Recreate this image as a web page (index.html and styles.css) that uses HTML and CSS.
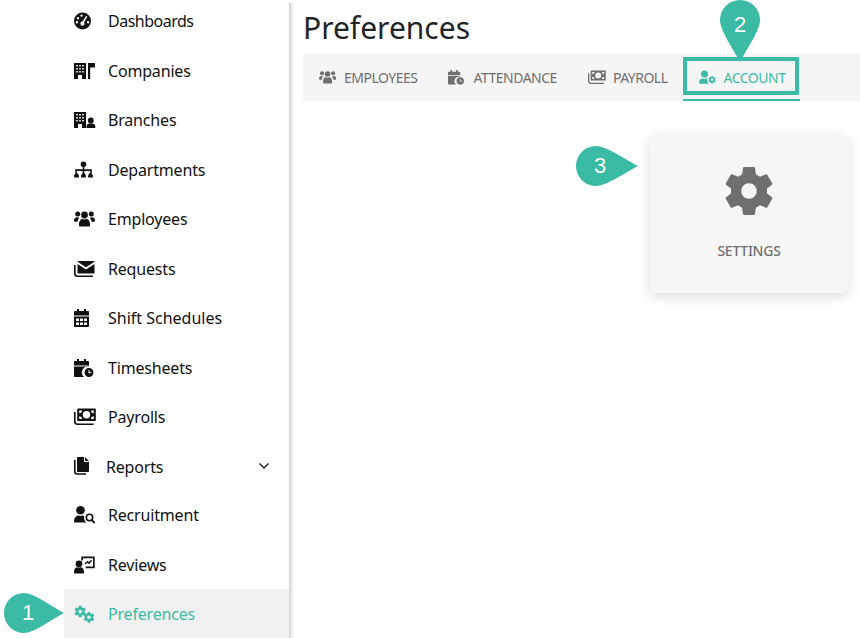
FILE: index.html
```html
<!DOCTYPE html>
<html lang="en">
<head>
  <meta charset="UTF-8" />
  <title>Preferences</title>
  <link rel="stylesheet" href="styles.css">
</head>
<body>
  <svg class="defs" width="0" height="0">
    <defs>
      <path id="gear" d="M19.14 12.94c.04-.3.06-.61.06-.94 0-.32-.02-.64-.07-.94l2.03-1.58c.18-.14.23-.41.12-.61l-1.92-3.32c-.12-.22-.37-.29-.59-.22l-2.39.96c-.5-.38-1.03-.7-1.62-.94l-.36-2.54c-.04-.24-.24-.41-.48-.41h-3.84c-.24 0-.43.17-.47.41l-.36 2.54c-.59.24-1.13.57-1.62.94l-2.39-.96c-.22-.08-.47 0-.59.22L2.74 8.87c-.12.21-.08.47.12.61l2.03 1.58c-.05.3-.09.63-.09.94s.02.64.07.94l-2.03 1.58c-.18.14-.23.41-.12.61l1.92 3.32c.12.22.37.29.59.22l2.39-.96c.5.38 1.03.7 1.62.94l.36 2.54c.05.24.24.41.48.41h3.84c.24 0 .44-.17.47-.41l.36-2.54c.59-.24 1.13-.56 1.62-.94l2.39.96c.22.08.47 0 .59-.22l1.92-3.32c.12-.22.07-.47-.12-.61l-2.01-1.58zM12 15.1c-1.71 0-3.1-1.39-3.1-3.1s1.39-3.1 3.1-3.1 3.1 1.39 3.1 3.1-1.39 3.1-3.1 3.1z"/>
      <symbol id="i-dash" viewBox="0 0 22 18">
        <path fill-rule="evenodd" d="M8.500.5a8.500 8.500 0 1 1 0 17 8.500 8.500 0 0 1 0-17zM7.500 2.400a1.200 1.200 0 1 0 0 2.400 1.200 1.200 0 0 0 0-2.400zM4 5a1.200 1.200 0 1 0 0 2.400A1.200 1.200 0 0 0 4 5zM2.900 9a1.200 1.200 0 1 0 0 2.400 1.200 1.200 0 0 0 0-2.400zM14.100 9a1.200 1.200 0 1 0 0 2.400 1.200 1.200 0 0 0 0-2.400zM12 4L8.600 9.600a2 2 0 1 0 1.400.8l3.400-5.600z"/>
      </symbol>
      <symbol id="i-company" viewBox="0 0 22 18">
        <path fill-rule="evenodd" d="M0 1h12v16H8v-4H4v4H0zM2.200 3v1.600h1.600V3zM5.200 3v1.600h1.600V3zM8.200 3v1.600h1.600V3zM2.200 6v1.600h1.600V6zM5.200 6v1.600h1.600V6zM8.200 6v1.600h1.600V6zM2.200 9v1.600h1.600V9zM5.200 9v1.600h1.600V9zM8.200 9v1.600h1.600V9z"/>
        <path d="M14 1h7v4.500h-4.800V17H14z"/>
      </symbol>
      <symbol id="i-branch" viewBox="0 0 22 18">
        <path fill-rule="evenodd" d="M0 1h12v16H8v-4H4v4H0zM2.200 3v1.600h1.600V3zM5.200 3v1.600h1.600V3zM8.200 3v1.600h1.600V3zM2.200 6v1.600h1.600V6zM5.200 6v1.600h1.600V6zM8.200 6v1.600h1.600V6zM2.200 9v1.600h1.600V9zM5.200 9v1.600h1.600V9zM8.200 9v1.600h1.600V9z"/>
        <circle cx="16.800" cy="9.500" r="2.900"/>
        <path d="M12.500 17v-1.500c0-1.800 1.400-3 3-3h2.800c1.600 0 3 1.200 3 3V17z"/>
      </symbol>
      <symbol id="i-sitemap" viewBox="0 0 22 18">
        <circle cx="9.500" cy="3.300" r="2.800"/>
        <path d="M8.700 5h1.600v3.300h7.500V12h-1.600V9.900h-5.900V12H8.700V9.900H2.800V12H1.200V8.300h7.500z"/>
        <path d="M0 16.500c0-2.800 1-4.500 2.500-4.500S5 13.700 5 16.500zM7 16.500c0-2.800 1-4.500 2.500-4.500s2.500 1.700 2.500 4.500zM14 16.500c0-2.800 1-4.500 2.500-4.500s2.500 1.700 2.500 4.500z"/>
      </symbol>
      <symbol id="i-users" viewBox="0 0 22 18">
        <circle cx="3.700" cy="4" r="2.500"/>
        <circle cx="17.300" cy="4" r="2.500"/>
        <circle cx="10.500" cy="5" r="3.400"/>
        <path d="M0 11c0-2.500 1-3.800 3-3.800 1 0 1.700.3 2.300.8-1.100 1-1.700 2.200-1.800 3.800H1c-.6 0-1-.3-1-.8zM21 11c0-2.500-1-3.800-3-3.800-1 0-1.700.3-2.300.8 1.100 1 1.700 2.200 1.800 3.800H20c.6 0 1-.3 1-.8zM5 14c0-3 1.600-5 3.500-5 1.300.6 2.700.6 4 0 1.900 0 3.500 2 3.500 5v1.500c0 .6-.4 1-1 1H6c-.6 0-1-.4-1-1z"/>
      </symbol>
      <symbol id="i-requests" viewBox="0 0 22 18">
        <path d="M4 1h15.500c.5 0 .9.300 1 .7L12 7.300 3.500 1.700c.1-.4.300-.7.500-.7zM3.500 4l8.500 5.400L20.500 4v8.500c0 .6-.4 1-1 1h-15c-.6 0-1-.4-1-1z"/>
        <path d="M.8 5v8.500c0 1.700 1.100 2.800 2.800 2.800H19" fill="none" stroke="currentColor" stroke-width="1.600"/>
      </symbol>
      <symbol id="i-calendar" viewBox="0 0 22 18">
        <path fill-rule="evenodd" d="M3 0h2v2h5V0h2v2h2c.6 0 1 .4 1 1v3.500H0V3c0-.6.400-1 1-1h2zM0 7.500h15V17c0 .6-.4 1-1 1H1c-.6 0-1-.4-1-1zM2 9.500v2.500h3V9.500zM6 9.500v2.500h3V9.500zM10 9.500v2.500h3V9.500zM2 13.500V16h3v-2.500zM6 13.500V16h3v-2.500zM10 13.500V16h3v-2.500z"/>
      </symbol>
      <symbol id="i-timesheet" viewBox="0 0 22 18">
        <path d="M3 0h2v2h5V0h2v2h2c.6 0 1 .4 1 1v3.500H0V3c0-.6.400-1 1-1h2zM0 7.500h15v.6a5.600 5.600 0 0 0-4.800 9.900H1c-.6 0-1-.4-1-1z"/>
        <path fill-rule="evenodd" d="M15 9a4.500 4.500 0 1 1 0 9 4.500 4.500 0 0 1 0-9zM14.500 11v3.200h3v-1h-2V11z"/>
      </symbol>
      <symbol id="i-money" viewBox="0 0 22 18">
        <path fill-rule="evenodd" d="M4 .5h17c.5 0 .8.300.8.800v10.900c0 .5-.3.800-.8.800H4c-.5 0-.8-.3-.8-.8V1.300c0-.5.300-.8.800-.8zM12.500 3a3.700 3.700 0 1 0 0 7.400 3.700 3.700 0 0 0 0-7.400zM5.200 2.500H8a2.800 2.800 0 0 1-2.800 2.800zM19.800 2.500H17a2.800 2.800 0 0 0 2.800 2.800zM5.200 11H8a2.800 2.800 0 0 0-2.800-2.800zM19.800 11H17a2.800 2.800 0 0 1 2.800-2.800z"/>
        <path d="M.8 4v9.500c0 1.700 1.100 2.800 2.800 2.800h16" fill="none" stroke="currentColor" stroke-width="1.600"/>
      </symbol>
      <symbol id="i-copy" viewBox="0 0 22 18">
        <path d="M4 0h6v4c0 .6.400 1 1 1h4v9c0 .6-.4 1-1 1H4c-.6 0-1-.4-1-1V1c0-.6.400-1 1-1zM11 0l4 4h-4z"/>
        <path d="M.8 3v11.500c0 1.500 1 2.500 2.500 2.500H12" fill="none" stroke="currentColor" stroke-width="1.600"/>
      </symbol>
      <symbol id="i-recruit" viewBox="0 0 22 18">
        <circle cx="6.500" cy="4.300" r="4.300"/>
        <path d="M0 15.500c0-3.600 2.200-6 4.500-6 1.300.5 2.700.5 4 0 .6 0 1.200.2 1.700.5-.6 2.600.3 5 2.300 6.500H1c-.6 0-1-.4-1-1z"/>
        <circle cx="15.500" cy="11.500" r="3.200" fill="none" stroke="currentColor" stroke-width="1.600"/>
        <path d="M17.500 13.800l3.200 3.200" stroke="currentColor" stroke-width="1.800"/>
      </symbol>
      <symbol id="i-review" viewBox="0 0 22 18">
        <circle cx="5" cy="7.800" r="3.400"/>
        <path d="M0 16c0-3 1.600-4.800 3.500-4.800 1 .4 2 .4 3 0 1.900 0 3.500 1.800 3.500 4.800v.5c0 .6-.4 1-1 1H1c-.6 0-1-.4-1-1z"/>
        <path d="M7.500 .5h13.200v11.800h-9v-1.700h7.300V2.200H9V4.500H7.300V1c0-.3 0-.5.200-.5z"/>
        <path d="M11 8l2.500-2.200 1.500 1.300 2.500-2.800" fill="none" stroke="currentColor" stroke-width="1.500"/>
      </symbol>
      <symbol id="i-cogs" viewBox="0 0 22 18">
        <use href="#gear" transform="translate(-1 -.6) scale(.6)"/>
        <use href="#gear" transform="translate(8.200 5.600) scale(.56)"/>
      </symbol>
      <symbol id="i-usercog" viewBox="0 0 22 18">
        <circle cx="6.800" cy="4.800" r="4.300"/>
        <path d="M0 15.500c0-3.200 2-5.200 4.500-5.200 1.500.5 3 .5 4.500 0 .4 0 .8.100 1.200.2-.3 2.300.1 4.300 1.200 6.500H1c-.6 0-1-.4-1-1z"/>
        <use href="#gear" transform="translate(10.200 6.200) scale(.48)"/>
      </symbol>
    </defs>
  </svg>

  <div class="page">
    <nav class="sidebar">
      <a class="nav-item tight"><svg class="nav-icon"><use href="#i-dash"/></svg>Dashboards</a>
      <a class="nav-item"><svg class="nav-icon"><use href="#i-company"/></svg>Companies</a>
      <a class="nav-item"><svg class="nav-icon"><use href="#i-branch"/></svg>Branches</a>
      <a class="nav-item"><svg class="nav-icon"><use href="#i-sitemap"/></svg>Departments</a>
      <a class="nav-item"><svg class="nav-icon"><use href="#i-users"/></svg>Employees</a>
      <a class="nav-item"><svg class="nav-icon"><use href="#i-requests"/></svg>Requests</a>
      <a class="nav-item wide"><svg class="nav-icon"><use href="#i-calendar"/></svg>Shift Schedules</a>
      <a class="nav-item"><svg class="nav-icon"><use href="#i-timesheet"/></svg>Timesheets</a>
      <a class="nav-item"><svg class="nav-icon"><use href="#i-money"/></svg>Payrolls</a>
      <a class="nav-item nav-group"><svg class="nav-icon"><use href="#i-copy"/></svg><span class="nav-label">Reports</span>
        <svg class="chevron" width="12" height="8" viewBox="0 0 12 8"><path d="M1.500 1.500L6 6l4.500-4.500" fill="none" stroke="currentColor" stroke-width="1.500"/></svg>
      </a>
      <a class="nav-item"><svg class="nav-icon"><use href="#i-recruit"/></svg>Recruitment</a>
      <a class="nav-item"><svg class="nav-icon"><use href="#i-review"/></svg>Reviews</a>
      <a class="nav-item active"><svg class="nav-icon"><use href="#i-cogs"/></svg>Preferences</a>
    </nav>

    <main class="content">
      <h1 class="title">Preferences</h1>
      <div class="tabs">
        <a class="tab"><svg class="tab-icon"><use href="#i-users"/></svg>Employees</a>
        <a class="tab"><svg class="tab-icon"><use href="#i-timesheet"/></svg>Attendance</a>
        <a class="tab"><svg class="tab-icon"><use href="#i-money"/></svg>Payroll</a>
        <a class="tab active"><svg class="tab-icon"><use href="#i-usercog"/></svg>Account</a>
      </div>
      <div class="cards">
        <div class="card">
          <svg class="card-icon" viewBox="0 0 24 24"><use href="#gear"/></svg>
          <span class="card-label">Settings</span>
        </div>
      </div>
    </main>
  </div>

  <!-- tutorial annotations -->
  <div class="focus-box"></div>
  <div class="marker marker-1">
    <svg width="60" height="40" viewBox="0 0 60 40"><path d="M20 0C30 0 45 12 60 20 45 28 30 40 20 40A20 20 0 0 1 20 0z"/></svg>
    <span>1</span>
  </div>
  <div class="marker marker-2">
    <svg width="40" height="62" viewBox="0 0 40 62"><path d="M20 0A20 20 0 0 1 40 20C40 30 28 47 20 62 12 47 0 30 0 20A20 20 0 0 1 20 0z"/></svg>
    <span>2</span>
  </div>
  <div class="marker marker-3">
    <svg width="62" height="40" viewBox="0 0 62 40"><path d="M20 0C30 0 47 12 62 20 47 28 30 40 20 40A20 20 0 0 1 20 0z"/></svg>
    <span>3</span>
  </div>
</body>
</html>
```

FILE: styles.css
```css
html, body {
  margin: 0;
  height: 100%;
  overflow: hidden;
  background: #fff;
}

body {
  font-family: 'Noto Sans', sans-serif;
  position: relative;
}

.defs {
  position: absolute;
}

.page {
  display: flex;
  height: 638px;
  overflow: hidden;
}

/* sidebar */
.sidebar {
  flex: none;
  width: 225px;
  margin: -3.55px 0 0 64px;
}

.nav-item {
  display: flex;
  align-items: center;
  height: 49.5px;
  padding-left: 10px;
  font-size: 16px;
  letter-spacing: -0.18px;
  color: #111;
}

.nav-item.tight {
  letter-spacing: -0.5px;
}

.nav-item.wide {
  letter-spacing: 0;
}

.nav-item.active {
  background: #f1f1f1;
  color: #3bbba5;
}

.nav-icon {
  flex: none;
  width: 22px;
  height: 18px;
  margin-right: 12px;
  fill: currentColor;
}

.nav-group {
  height: 48.5px;
}

.nav-group .nav-icon {
  margin-right: 10px;
}

.nav-label {
  flex: 1;
  margin-top: 2px;
}

.chevron {
  margin-right: 19px;
  color: #222;
}

/* main area */
.content {
  flex: 1;
  min-width: 0;
  margin-top: 3px;
  padding-left: 14px;
  background: linear-gradient(90deg, #d0d0d0, #fff) no-repeat left top / 5px 100%;
}

.title {
  margin: 0;
  height: 50px;
  font-size: 30px;
  font-weight: 400;
  line-height: 50px;
  color: #212529;
}

.tabs {
  display: flex;
  height: 48px;
  background: #f5f5f5;
}

.tab {
  display: flex;
  align-items: center;
  padding: 1px 15px 0 16px;
  font-size: 14px;
  letter-spacing: -0.5px;
  text-transform: uppercase;
  color: #6f6f6f;
}

.tab.active {
  color: #3bbba5;
  box-shadow: inset 0 -2px 0 #3bbba5;
}

.tab-icon {
  flex: none;
  width: 18px;
  height: 14.7px;
  margin-right: 7px;
  fill: currentColor;
}

.cards {
  display: flex;
  justify-content: flex-end;
  padding: 32px 11px 0 0;
}

.card {
  display: flex;
  flex-direction: column;
  align-items: center;
  width: 200px;
  height: 160px;
  padding-top: 31px;
  box-sizing: border-box;
  background: #f6f6f6;
  border-radius: 8px;
  box-shadow: 0 4px 12px rgba(0, 0, 0, 0.13);
}

.card-icon {
  width: 60px;
  height: 60px;
  margin-top: -3px;
  fill: #6f6f6f;
}

.card-label {
  margin-top: 20px;
  font-size: 14px;
  font-weight: 500;
  letter-spacing: -0.25px;
  text-transform: uppercase;
  color: #6f6f6f;
}

/* annotations */
.focus-box {
  position: absolute;
  left: 683px;
  top: 57px;
  width: 116px;
  height: 38px;
  box-sizing: border-box;
  border: 4px solid #3bbba5;
}

.marker {
  position: absolute;
  display: flex;
  align-items: center;
  justify-content: center;
  font-family: 'Liberation Sans', sans-serif;
  font-size: 22px;
  color: #fff;
}

.marker svg {
  position: absolute;
  left: 0;
  top: 0;
  fill: #3bbba5;
}

.marker span {
  position: relative;
}

.marker-1 {
  left: 4px;
  top: 593px;
  width: 48px;
  height: 40px;
}

.marker-2 {
  left: 720px;
  top: 0;
  width: 40px;
  height: 50px;
}

.marker-3 {
  left: 576px;
  top: 146px;
  width: 48px;
  height: 40px;
}
```
